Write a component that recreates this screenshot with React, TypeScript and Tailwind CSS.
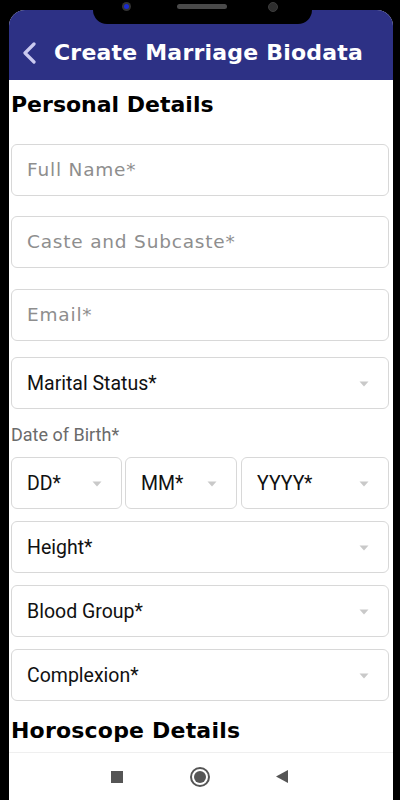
import React from "react"

const textInputs = ["Full Name*", "Caste and Subcaste*", "Email*"]

function Caret() {
  return (
    <svg width="10" height="6" viewBox="0 0 10 6" className="shrink-0">
      <path d="M0.5 0.5 L9.5 0.5 L5 5.5 Z" fill="#c9c9c9" />
    </svg>
  )
}

function TextField({ placeholder, className }: { placeholder: string; className?: string }) {
  return (
    <div
      className={`h-[52px] rounded-[6px] border border-[#d8d8d8] flex items-center pl-[15px] ${className ?? ""}`}
    >
      <span className="text-[18.5px] tracking-[0.8px] text-[#8e8e8e] font-['DejaVu_Sans',sans-serif]">
        {placeholder}
      </span>
    </div>
  )
}

function Select({ label, className }: { label: string; className?: string }) {
  return (
    <div
      className={`h-[52px] rounded-[6px] border border-[#d8d8d8] flex items-center justify-between pl-[15px] pr-[19px] pt-[2px] ${className ?? ""}`}
    >
      <span className="text-[19.5px] text-[#111] font-['Roboto',sans-serif]">{label}</span>
      <Caret />
    </div>
  )
}

export default function App() {
  return (
    <div className="relative w-[400px] h-[800px] bg-black pt-[10px] pl-[9px] pr-[7px] flex flex-col overflow-hidden">
      <div className="flex-1 bg-white rounded-t-[16px] overflow-hidden flex flex-col">
        {/* app bar */}
        <div className="h-[70px] shrink-0 bg-[#2d3185] flex items-center pt-[16px] pl-[14px]">
          <svg width="14" height="22" viewBox="0 0 14 22" className="shrink-0">
            <polyline
              points="11,2 2,11 11,20"
              fill="none"
              stroke="#cbcaf0"
              strokeWidth="3.2"
              strokeLinecap="round"
              strokeLinejoin="round"
            />
          </svg>
          <span className="ml-[17px] text-[22px] tracking-[0.2px] font-bold text-white font-['DejaVu_Sans',sans-serif] leading-none">
            Create Marriage Biodata
          </span>
        </div>

        {/* form */}
        <div className="flex-1 overflow-hidden pt-[11px] pl-[2px] pr-[4px]">
          <h2 className="text-[22px] leading-[28px] font-bold text-black font-['DejaVu_Sans',sans-serif]">
            Personal Details
          </h2>
          <TextField placeholder={textInputs[0]} className="mt-[25px]" />
          <TextField placeholder={textInputs[1]} className="mt-[20px]" />
          <TextField placeholder={textInputs[2]} className="mt-[21px]" />
          <Select label="Marital Status*" className="mt-[16px]" />

          <div className="mt-[14px] text-[18px] leading-[24px] text-[#6b6b6b] font-['Roboto',sans-serif]">
            Date of Birth*
          </div>
          <div className="mt-[10px] flex gap-[3px]">
            <Select label="DD*" className="w-[111px]" />
            <Select label="MM*" className="w-[112px]" />
            <Select label="YYYY*" className="flex-1 ml-[1px]" />
          </div>

          <Select label="Height*" className="mt-[12px]" />
          <Select label="Blood Group*" className="mt-[12px]" />
          <Select label="Complexion*" className="mt-[12px]" />

          <h2 className="mt-[16px] text-[22px] leading-[28px] font-bold text-black font-['DejaVu_Sans',sans-serif] tracking-[0.2px]">
            Horoscope Details
          </h2>
        </div>

        {/* system nav */}
        <div className="h-[48px] shrink-0 border-t border-[#efefef] flex items-center pl-[102px]">
          <div className="w-[12px] h-[12px] bg-[#555]" />
          <div className="ml-[67px] w-[20px] h-[20px] rounded-full border-[2px] border-[#555] flex items-center justify-center">
            <div className="w-[12px] h-[12px] rounded-full bg-[#555]" />
          </div>
          <svg width="12" height="13" viewBox="0 0 12 13" className="ml-[66px]">
            <path d="M12 0 L12 13 L0 6.5 Z" fill="#555" />
          </svg>
        </div>
      </div>

      {/* notch */}
      <div className="absolute top-0 left-[93px] w-[219px] h-[24px] bg-black rounded-b-[14px]">
        <div className="absolute left-[29px] top-[2px] w-[9px] h-[9px] rounded-full bg-[#333] flex items-center justify-center">
          <div className="w-[5px] h-[5px] rounded-full bg-[#1a2bd0]" />
        </div>
        <div className="absolute left-[84px] top-[4px] w-[50px] h-[5px] rounded-full bg-[#4a4a4a]" />
        <div className="absolute left-[175px] top-[2px] w-[10px] h-[10px] rounded-full bg-[#2e2e2e] border border-[#3c3c3c]" />
      </div>
    </div>
  )
}
